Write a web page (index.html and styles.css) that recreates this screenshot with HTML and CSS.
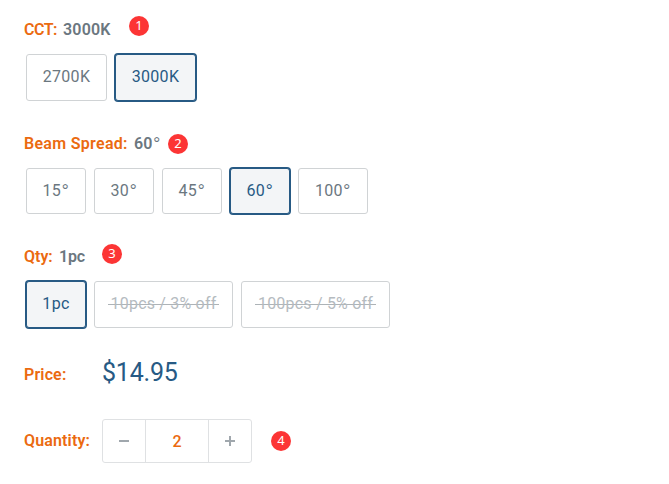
FILE: index.html
```html
<!DOCTYPE html>
<html lang="en">
<head>
    <meta charset="UTF-8">
    <meta name="viewport" content="width=device-width, initial-scale=1.0">
    <title>Product Options</title>
    <link rel="stylesheet" href="styles.css">
</head>
<body>

<form class="product-form">
    <div class="option">
        <div class="option-title">
            <span class="label label-cct">CCT:</span>
            <span class="value">3000K</span>
            <span class="badge badge-cct">1</span>
        </div>
        <div class="swatches">
            <button type="button" class="swatch swatch-cct">2700K</button>
            <button type="button" class="swatch swatch-cct selected">3000K</button>
        </div>
    </div>

    <div class="option">
        <div class="option-title">
            <span class="label label-beam">Beam Spread:</span>
            <span class="value">60<span class="deg">°</span></span>
            <span class="badge badge-beam">2</span>
        </div>
        <div class="swatches swatches-beam">
            <button type="button" class="swatch">15<span class="deg">°</span></button>
            <button type="button" class="swatch">30<span class="deg">°</span></button>
            <button type="button" class="swatch">45<span class="deg">°</span></button>
            <button type="button" class="swatch selected">60<span class="deg">°</span></button>
            <button type="button" class="swatch swatch-wide">100<span class="deg">°</span></button>
        </div>
    </div>

    <div class="option option-qty">
        <div class="option-title">
            <span class="label label-qty">Qty:</span>
            <span class="value value-qty">1pc</span>
            <span class="badge badge-qty">3</span>
        </div>
        <div class="swatches">
            <button type="button" class="swatch selected">1pc</button>
            <button type="button" class="swatch swatch-ten disabled"><span class="strike">10pcs / 3% off</span></button>
            <button type="button" class="swatch swatch-hundred disabled"><span class="strike">100pcs / 5% off</span></button>
        </div>
    </div>

    <div class="info-row price-row">
        <span class="label label-price">Price:</span>
        <span class="price">$14.95</span>
    </div>

    <div class="info-row quantity-row">
        <span class="label label-quantity">Quantity:</span>
        <div class="stepper">
            <button type="button" class="step" aria-label="Decrease">
                <svg width="10" height="10" viewBox="0 0 10 10"><path d="M0 5h10" /></svg>
            </button>
            <span class="amount">2</span>
            <button type="button" class="step" aria-label="Increase">
                <svg width="10" height="10" viewBox="0 0 10 10"><path d="M0 5h10M5 0v10" /></svg>
            </button>
        </div>
        <span class="badge badge-quantity">4</span>
    </div>
</form>

</body>
</html>
```

FILE: styles.css
```css
* {
    box-sizing: border-box;
}
body {
    margin: 0;
    background: #fff;
    font-family: Roboto, "Liberation Sans", sans-serif;
    font-size: 16px;
    color: #6b777f;
}
button {
    font: inherit;
    color: inherit;
    padding: 0;
    cursor: pointer;
}
.product-form {
    padding: 16px 24px 0;
}
.option {
    height: 114px;
}
.option-qty {
    height: 113px;
    margin-top: -1px;
}
.option-title {
    position: relative;
    display: flex;
    height: 38px;
    line-height: 28px;
}
.label {
    flex: none;
    font-weight: 600;
    color: #eb6a10;
    white-space: nowrap;
}
.value {
    font-weight: 600;
    letter-spacing: 0.2px;
    white-space: nowrap;
}
.value-qty {
    letter-spacing: -0.2px;
}
.label-cct {
    width: 39px;
    letter-spacing: -0.5px;
}
.label-beam {
    width: 110px;
    letter-spacing: 0.3px;
}
.label-qty {
    width: 35px;
}
.label-price,
.label-quantity {
    letter-spacing: 0.15px;
}
.deg {
    font-size: 21px;
    font-weight: 300;
    line-height: 0;
    vertical-align: -3px;
}
.badge {
    position: absolute;
    width: 20px;
    height: 20px;
    border-radius: 50%;
    background: #fc3535;
    color: #fff;
    font-family: "Noto Sans", sans-serif;
    font-size: 13px;
    font-weight: 400;
    line-height: 19px;
    text-align: center;
}
.badge-cct {
    left: 105px;
    top: 0;
}
.badge-beam {
    left: 144px;
    top: 4px;
}
.badge-qty {
    left: 78px;
    top: 1px;
}
.badge-quantity {
    left: 247px;
    top: 12px;
}
.swatches {
    display: flex;
    gap: 8px;
    padding-left: 2px;
}
.swatch {
    width: 60px;
    height: 47px;
    padding-bottom: 2px;
    border: 1px solid #d0d3d5;
    border-radius: 3px;
    background: #fff;
    letter-spacing: 0.3px;
    white-space: nowrap;
}
.swatches-beam .swatch {
    height: 46px;
}
.swatch-cct {
    width: 81px;
}
.swatches .swatch-wide {
    width: 70px;
}
.swatch-ten {
    width: 139px;
}
.swatch-hundred {
    width: 149px;
}
.swatch.selected {
    border-color: #275a84;
    background: #f3f5f7;
    box-shadow: 0 0 0 1px #275a84;
    color: #275a84;
}
.swatch.disabled {
    color: #b5bbbf;
}
.strike {
    display: inline-block;
    padding: 0 3px;
    background: linear-gradient(#adb3b7, #adb3b7) center 10px / 100% 1px no-repeat;
    letter-spacing: 0.2px;
}
.info-row {
    position: relative;
    display: flex;
    align-items: center;
}
.info-row .label {
    width: 78px;
}
.price-row {
    height: 32px;
}
.label-price {
    padding-top: 4px;
}
.price {
    font-size: 25px;
    letter-spacing: -0.2px;
    color: #275a84;
}
.quantity-row {
    height: 44px;
    margin-top: 31px;
}
.label-quantity {
    padding-bottom: 1px;
}
.stepper {
    display: flex;
    width: 150px;
    height: 44px;
    border: 1px solid #dfe1e3;
    border-radius: 3px;
}
.step {
    display: flex;
    align-items: center;
    justify-content: center;
    width: 42px;
    border: 0;
    background: none;
}
.step svg {
    fill: none;
    stroke: #a0a7ad;
    stroke-width: 2;
}
.amount {
    flex: 1;
    border: solid #dfe1e3;
    border-width: 0 1px;
    color: #eb6a10;
    font-weight: 500;
    line-height: 43px;
    text-align: center;
}
```
